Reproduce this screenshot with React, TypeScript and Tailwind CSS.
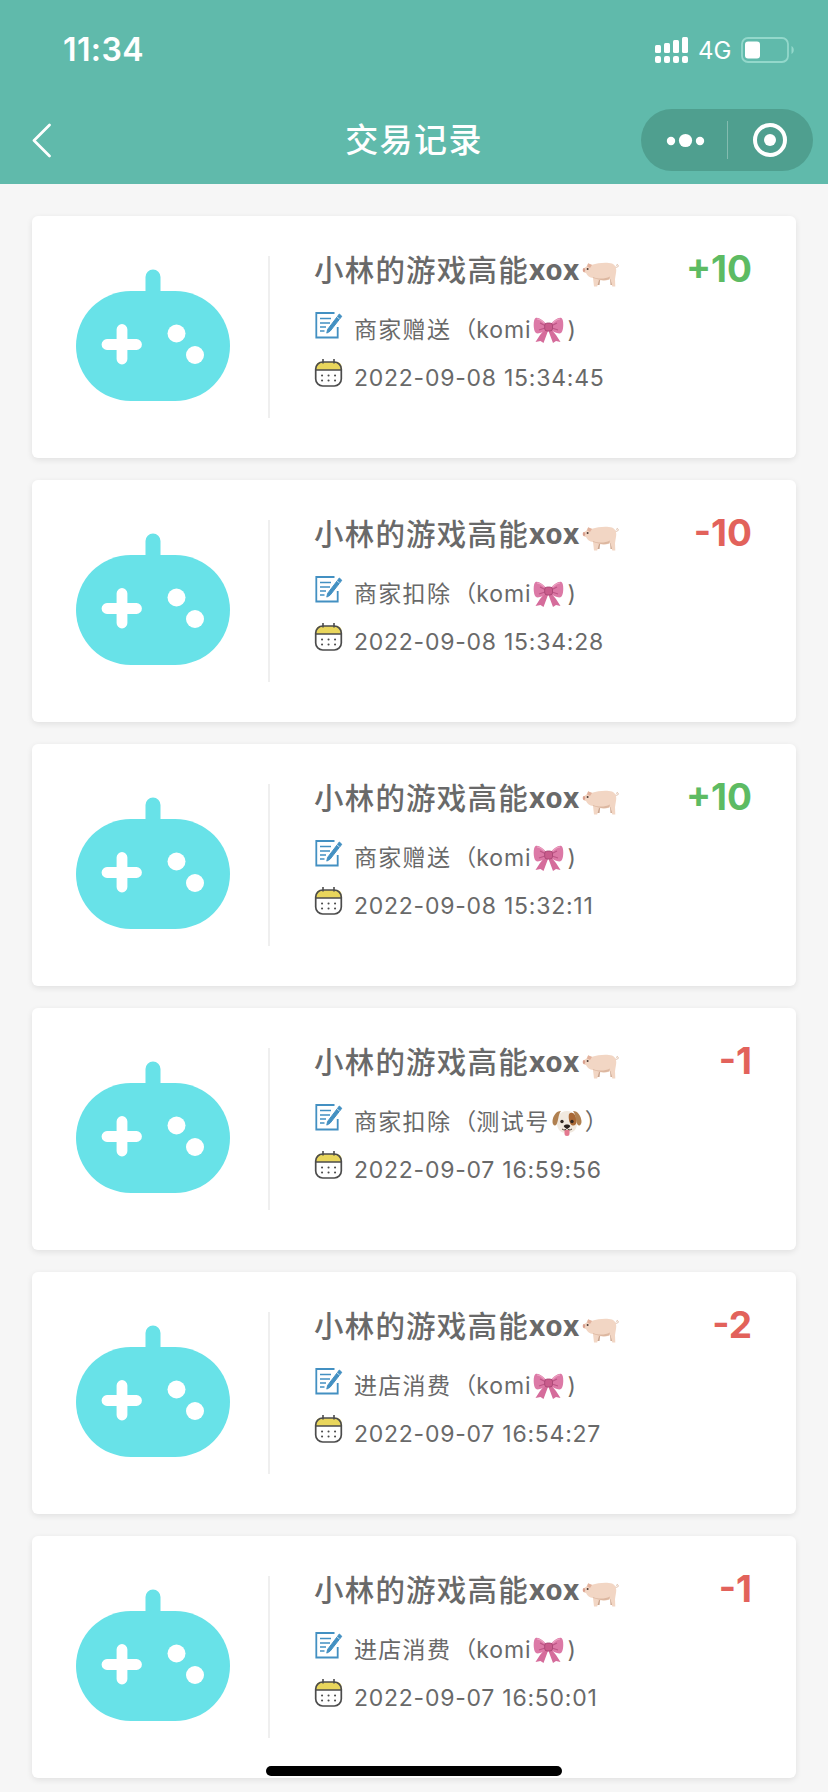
import { ReactNode } from "react";

type RecordItem = {
  amount: string;
  action: string;
  operator: "komi" | "test";
  time: string;
};

const records: RecordItem[] = [
  { amount: "+10", action: "商家赠送", operator: "komi", time: "2022-09-08 15:34:45" },
  { amount: "-10", action: "商家扣除", operator: "komi", time: "2022-09-08 15:34:28" },
  { amount: "+10", action: "商家赠送", operator: "komi", time: "2022-09-08 15:32:11" },
  { amount: "-1", action: "商家扣除", operator: "test", time: "2022-09-07 16:59:56" },
  { amount: "-2", action: "进店消费", operator: "komi", time: "2022-09-07 16:54:27" },
  { amount: "-1", action: "进店消费", operator: "komi", time: "2022-09-07 16:50:01" },
];

export default function App() {
  return (
    <div className="relative h-[1792px] w-[828px] overflow-hidden bg-[#f6f6f6] font-['Inter','Noto_Sans_CJK_SC',sans-serif]">
      <header className="h-[184px] bg-[#60baab] text-white">
        <StatusBar />
        <NavBar />
      </header>
      <main className="flex flex-col gap-[22px] px-8 pt-8">
        {records.map((item) => (
          <RecordCard key={item.time} item={item} />
        ))}
      </main>
      <div className="absolute bottom-[16px] left-[266px] h-[10px] w-[296px] rounded-full bg-black" />
    </div>
  );
}

function StatusBar() {
  return (
    <div className="flex h-[100px] items-center justify-between pr-[33px] pl-[63px]">
      <span className="text-[32px] leading-none font-semibold tracking-[0.4px]">11:34</span>
      <div className="flex items-center">
        <svg className="h-[26px] w-[34px]" viewBox="0 0 34 26" fill="#fff">
          <rect x="0" y="8" width="6" height="8" rx="1.5" />
          <rect x="9" y="6" width="6" height="10" rx="1.5" />
          <rect x="18" y="3" width="6" height="13" rx="1.5" />
          <rect x="27" y="0" width="6" height="16" rx="1.5" />
          <rect x="0" y="19" width="6" height="7" rx="2" />
          <rect x="9" y="19" width="6" height="7" rx="2" />
          <rect x="18" y="19" width="6" height="7" rx="2" />
          <rect x="27" y="19" width="6" height="7" rx="2" />
        </svg>
        <span className="ml-[9px] w-[43px] pt-[2px] text-[24px] leading-none">4G</span>
        <svg className="h-[26px] w-[54px]" viewBox="0 0 54 26" fill="none">
          <rect x="1" y="1" width="46" height="24" rx="6" stroke="#93d8cb" strokeWidth="1.8" />
          <rect x="4" y="4.5" width="15" height="17" rx="3" fill="#fff" />
          <path d="M50.5 9c3 1.5 3 6.5 0 8z" fill="#93d8cb" />
        </svg>
      </div>
    </div>
  );
}

function NavBar() {
  return (
    <div className="grid h-[80px] grid-cols-[200px_1fr_200px] items-center">
      <svg className="ml-[31px] h-[36px] w-[20px]" viewBox="0 0 20 36" fill="none">
        <path d="M18.5 3 3 18.5 18.5 34" stroke="#fff" strokeWidth="2.7" strokeLinecap="round" strokeLinejoin="round" />
      </svg>
      <h1 className="text-center text-[33px] leading-none font-medium tracking-[1.4px]">交易记录</h1>
      <div className="ml-[13px] flex h-[62px] w-[172px] items-center rounded-full bg-[#4f9f8f]">
        <svg className="h-[62px] w-[172px]" viewBox="0 0 172 62" fill="#fff">
          <circle cx="30" cy="32" r="4.2" />
          <circle cx="44.5" cy="31.5" r="6.6" />
          <circle cx="59" cy="32" r="4.2" />
          <rect x="86" y="12" width="1" height="38" opacity=".3" />
          <circle cx="129" cy="31" r="15" fill="none" stroke="#fff" strokeWidth="4" />
          <circle cx="129" cy="31" r="6" />
        </svg>
      </div>
    </div>
  );
}

function RecordCard({ item }: { item: RecordItem }) {
  const positive = item.amount.startsWith("+");
  return (
    <section className="flex h-[242px] shrink-0 rounded-[6px] bg-white shadow-[0_2px_6px_rgba(0,0,0,0.09)]">
      <div className="w-[236px] pt-[53px] pl-[44px]">
        <Gamepad />
      </div>
      <div className="mt-10 h-[162px] w-[2px] bg-[#efefef]" />
      <div className="flex-1 pt-[32px] pl-[44px] text-[#696969]">
        <div className="flex h-[44px] items-center">
          <span className="pt-px text-[29.5px] leading-none font-medium tracking-[1.2px] whitespace-nowrap">小林的游戏高能</span>
          <span className="pb-[2px] font-['Noto_Sans',sans-serif] text-[28px] leading-none font-bold tracking-[0.8px]">xox</span>
          <Pig />
          <span
            className={
              positive
                ? "ml-auto pr-[44px] pb-[3px] text-[37px] leading-none font-bold text-[#5dbb63]"
                : "ml-auto pr-[44px] pb-[3px] text-[37px] leading-none font-bold text-[#e2625b]"
            }
          >
            {item.amount}
          </span>
        </div>
        <div className="mt-[20px] flex flex-col gap-[12px]">
          <InfoRow icon={<NoteIcon />}>
            <span className="tracking-[1.3px]">{item.action}</span>
            <span className="ml-[2px]">（</span>
            {item.operator === "komi" ? (
              <>
                <span className="tracking-[0.9px]">komi</span>
                <Bow />
                <span className="ml-[3px]">)</span>
              </>
            ) : (
              <>
                <span className="tracking-[1.5px]">测试号</span>
                <Dog />
                <span className="ml-[3px]">）</span>
              </>
            )}
          </InfoRow>
          <InfoRow icon={<CalendarIcon />}>
            <span className="font-normal tracking-[0.75px]">{item.time}</span>
          </InfoRow>
        </div>
      </div>
    </section>
  );
}

function InfoRow({ icon, children }: { icon: ReactNode; children: ReactNode }) {
  return (
    <div className="flex h-[36px] items-center">
      <div className="w-[40px] shrink-0 pb-[10px]">{icon}</div>
      <div className="flex items-center text-[23px] leading-none font-[370] whitespace-nowrap">{children}</div>
    </div>
  );
}

function Gamepad() {
  return (
    <svg className="h-[133px] w-[154px]" viewBox="0 0 154 133" fill="none">
      <path d="M69.5 28V8a7.5 7.5 0 0 1 15 0v20z" fill="#68e2e8" />
      <rect x="0" y="22" width="154" height="110" rx="55" fill="#68e2e8" />
      <path d="M31 75.5h29.5M46 60.5V90" stroke="#fff" strokeWidth="10.8" strokeLinecap="round" />
      <circle cx="100.5" cy="64.5" r="9" fill="#fff" />
      <circle cx="119" cy="86" r="9" fill="#fff" />
    </svg>
  );
}

function NoteIcon() {
  return (
    <svg className="h-[28px] w-[30px]" viewBox="0 0 30 28" fill="none" stroke="#4390c2" strokeWidth="1.8">
      <path d="M20.5 2H2.3v24.5h21.4V16" />
      <path d="M6 7.5h11M6 12h10M6 16h6M6 20h4.5" strokeWidth="1.6" />
      <path d="m25.3 3 2.5 2.3L16 20.3l-3.2 1.8.8-3.7z" fill="#4390c2" strokeWidth="1" />
      <path d="m22.5 5.5 3.2 2.7" stroke="#fff" strokeWidth=".7" />
    </svg>
  );
}

function CalendarIcon() {
  return (
    <svg className="h-[30px] w-[30px]" viewBox="0 0 30 30" fill="none">
      <path d="M2 12V9q0-5 5-5h15q5.5 0 5.5 5v3z" fill="#e9d65c" />
      <rect x="1.7" y="4" width="25.6" height="24" rx="7" stroke="#4c4c4c" strokeWidth="1.7" />
      <path d="M2 12h25.3M9 1v4.5M20 1v4.5" stroke="#4c4c4c" strokeWidth="1.6" />
      <path d="M8 17.5h.1M14.5 17.5h.1M21 17.5h.1M8 22.5h.1M14.5 22.5h.1M21 22.5h.1" stroke="#4c4c4c" strokeWidth="2" strokeLinecap="round" />
    </svg>
  );
}

function Pig() {
  return (
    <svg className="mt-[10px] ml-[2px] h-[26px] w-[38px]" viewBox="0 0 38 26" fill="none">
      <path d="M33 5c2 1 4-.5 3-2s-2 .5-.8 1" stroke="#dfc0ac" strokeWidth="1" />
      <path d="m14 15 1 8h2.5l1-8zM28 15l.5 8h2.5l1-9z" fill="#c9a48e" />
      <path d="M1.5 6.5 4.500 4.500 6 1.500l4 1.200c6-2 15-2.700 20-1.200 4 1.500 5 6 3.800 10.500l-.8 5 .3 7.500h-3L28.500 17c-4 1.800-8 1.700-11.500 1l-1.800 6.500H12L11 16c-3.500-.5-5.500-2-7-5-2 0-3-1-3-2.500z" fill="#f2d6c4" />
      <path d="M11 15c5 2.200 12 2.200 17-.5l-.8 2.800c-4 1.200-7.500 1-10.500.2L11.200 16z" fill="#dcb7a0" />
      <path d="m5 4.5 1.200-3.200L10 3 8 6z" fill="#e2b29d" />
      <ellipse cx="2" cy="8" rx="1.3" ry="2" fill="#d9a08e" />
      <circle cx="5.6" cy="7" r="1" fill="#493832" />
    </svg>
  );
}

function Bow() {
  return (
    <svg className="ml-[2px] h-[28px] w-[31px]" viewBox="0 0 31 28" fill="none">
      <path d="m12 13-5 6-4.5 7 5-1 3 2L15 15zM18 13l5 6 4.5 7-4.5-1-3 2-4.500-12z" fill="#d56c9b" />
      <path d="M14 8.500C10 4 5 .5 2.500 2S.2 14 2.500 16.500 10 16 14 13.500zM17 8.500c4-4.500 9-8 11.500-6.500s2.300 12 0 14.500S21 16 17 13.500z" fill="#dc79a6" />
      <path d="M13 10 7 7M12 12l-6 2M18 10l6-3M19 12l6 2" stroke="#bd5485" strokeWidth="1.2" />
      <rect x="11.7" y="7" width="7.800" height="8" rx="2.5" fill="#c95c8c" stroke="#a34370" strokeWidth=".8" />
      <path d="M4 3c3 0 5 2 7.500 4M27 3c-3 0-5 2-7.500 4" stroke="#eda3c3" strokeWidth="1.2" />
    </svg>
  );
}

function Dog() {
  return (
    <svg className="ml-[2px] h-[27px] w-[30px]" viewBox="0 0 30 27" fill="none">
      <path d="M15 2C8 2 5 7 5 14s4 10 10 10 10-3 10-10S22 2 15 2z" fill="#f1e9df" />
      <path d="M17 5c3-3 7 0 7.500 6 .3 4-1.500 6-4 5.500-3-.5-4.500-8-3.500-11.500z" fill="#a96835" />
      <path d="M9 2C4 2 1 7 .5 12c-.3 4 2.500 6 4 3.500C6.500 12 6 6 9 2zM21 2c5 0 8 5 8.500 10 .3 4-2.500 6-4 3.500C23.500 12 24 6 21 2z" fill="#b08050" />
      <circle cx="10" cy="12.5" r="1.7" fill="#302620" />
      <circle cx="20" cy="12.5" r="1.7" fill="#302620" />
      <path d="M12.500 21h5v3.500a2.500 2.500 0 0 1-5 0z" fill="#e4798f" />
      <path d="M10 20c2 1.500 4 1 5-.8 1 1.800 3 2.300 5 .8" stroke="#55443a" strokeWidth="1" />
      <path d="M12 16.500c1-1.500 5-1.500 6 0s-2 3-3 3-4-1.500-3-3z" fill="#29211e" />
    </svg>
  );
}
